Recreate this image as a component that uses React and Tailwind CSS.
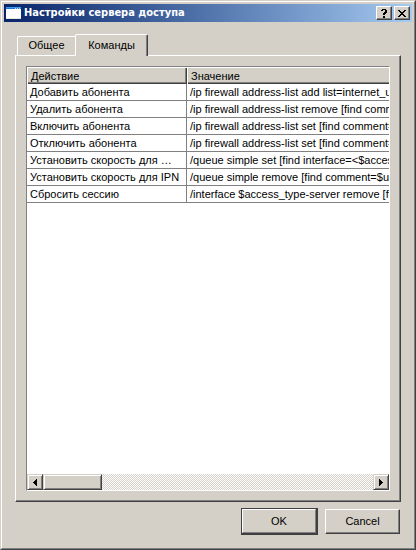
const rows = [
  ['Добавить абонента', '/ip firewall address-list add list=internet_users'],
  ['Удалить абонента', '/ip firewall address-list remove [find comment=$user]'],
  ['Включить абонента', '/ip firewall address-list set [find comment=$user]'],
  ['Отключить абонента', '/ip firewall address-list set [find comment=$user]'],
  ['Установить скорость для …', '/queue simple set [find interface=<$access_type>]'],
  ['Установить скорость для IPN', '/queue simple remove [find comment=$user]'],
  ['Сбросить сессию', '/interface $access_type-server remove [find user=$user]'],
];

// Classic two-tone raised edge shared by all the push buttons.
const raised =
  'bg-[#d4d0c8] border border-t-white border-l-white border-r-[#404040] border-b-[#404040] shadow-[inset_-1px_-1px_0_#808080]';
const scrollRaised =
  'bg-[#d4d0c8] border border-t-[#d4d0c8] border-l-[#d4d0c8] border-r-[#404040] border-b-[#404040] shadow-[inset_1px_1px_0_#fff,inset_-1px_-1px_0_#808080]';

function TitleBar() {
  return (
    <header className="flex h-[18px] shrink-0 items-center bg-linear-to-r from-[#0a246a] to-[#a6caf0] px-0.5">
      <svg className="h-3 w-[15px] shrink-0" viewBox="0 0 15 12" shapeRendering="crispEdges" aria-hidden="true">
        <rect width="15" height="12" fill="#fff" />
        <rect width="15" height="2" fill="#1c78d8" />
        <rect width="15" height="1" fill="#3c9cf0" />
        <rect x="9" y="1" width="1" height="1" fill="#bfe0ff" />
        <rect x="11" y="1" width="1" height="1" fill="#bfe0ff" />
        <rect x="13" y="1" width="1" height="1" fill="#f0b090" />
        <rect y="11" width="15" height="1" fill="#e8e4d8" />
      </svg>
      <h1 className="ml-[3px] grow truncate font-['DejaVu_Sans_Condensed','DejaVu_Sans',sans-serif] text-[11px] leading-[18px] font-bold text-white">
        Настройки сервера доступа
      </h1>
      <div className="flex gap-0.5">
        <button aria-label="Help" className={`flex h-3.5 w-4 items-center justify-center ${raised}`}>
          <svg className="h-[9px] w-1.5" viewBox="0 0 6 9" shapeRendering="crispEdges" aria-hidden="true">
            <path d="M1 0h4v1h1v3h-1v1h-1v1h-2v-2h1v-1h1v-2h-2v1h-2v-1h1zM2 7h2v2h-2z" />
          </svg>
        </button>
        <button aria-label="Close" className={`flex h-3.5 w-4 items-center justify-center ${raised}`}>
          <svg className="h-[7px] w-2" viewBox="0 0 8 7" shapeRendering="crispEdges" aria-hidden="true">
            <path d="M0 0h2v1h1v1h2v-1h1v-1h2v1h-1v1h-1v1h-1v1h1v1h1v1h1v1h-2v-1h-1v-1h-2v1h-1v1h-2v-1h1v-1h1v-1h1v-1h-1v-1h-1v-1h-1z" />
          </svg>
        </button>
      </div>
    </header>
  );
}

function Tabs() {
  return (
    <div role="tablist" className="flex shrink-0 items-end pl-0.5">
      <button
        role="tab"
        aria-selected="false"
        className="h-[19px] w-[58px] rounded-tl-[2px] border-t border-l border-white pb-px text-center leading-[17px]"
      >
        Общее
      </button>
      <button
        role="tab"
        aria-selected="true"
        className="relative z-10 -mb-px h-[22px] w-[73px] rounded-t-[2px] border border-b-0 border-t-white border-r-[#404040] border-l-white bg-[#d4d0c8] pb-0.5 text-center leading-[18px] shadow-[inset_-1px_0_0_#808080]"
      >
        Команды
      </button>
    </div>
  );
}

function ScrollBar() {
  return (
    <div className="flex h-4 shrink-0 bg-[repeating-conic-gradient(#fff_0_25%,#d4d0c8_0_50%)] bg-size-[2px_2px]">
      <button aria-label="Scroll left" className={`flex w-4 items-center justify-center ${scrollRaised}`}>
        <svg className="h-[7px] w-1" viewBox="0 0 4 7" shapeRendering="crispEdges" aria-hidden="true">
          <path d="M3 0h1v7h-1v-1h-1v-1h-1v-1h-1v-1h1v-1h1v-1h1z" />
        </svg>
      </button>
      <div className={`w-[59px] ${scrollRaised}`} />
      <button aria-label="Scroll right" className={`ml-auto flex w-4 items-center justify-center ${scrollRaised}`}>
        <svg className="h-[7px] w-1" viewBox="0 0 4 7" shapeRendering="crispEdges" aria-hidden="true">
          <path d="M0 0h1v1h1v1h1v1h1v1h-1v1h-1v1h-1v1h-1z" />
        </svg>
      </button>
    </div>
  );
}

function CommandTable() {
  const head =
    'h-[17px] border-t border-l border-white bg-[#d4d0c8] p-0 pl-[3px] text-left font-normal leading-[15px] shadow-[inset_-1px_-1px_0_#404040,inset_-2px_-2px_0_#808080]';
  return (
    <div className="flex min-h-0 grow flex-col border border-t-[#808080] border-r-white border-b-white border-l-[#808080] bg-white">
      <div className="grow overflow-hidden">
        <table className="w-[200%] table-fixed border-separate border-spacing-0 whitespace-nowrap">
          <colgroup>
            <col className="w-40" />
            <col />
          </colgroup>
          <thead>
            <tr>
              <th scope="col" className={head}>Действие</th>
              <th scope="col" className={head}>Значение</th>
            </tr>
          </thead>
          <tbody>
            {rows.map(([action, value]) => (
              <tr key={action}>
                <td className="h-[17px] border-r border-b border-[#808080] p-0 pl-[3px] leading-4">{action}</td>
                <td className="h-[17px] border-b border-[#808080] p-0 pl-[3px] leading-4">{value}</td>
              </tr>
            ))}
          </tbody>
        </table>
      </div>
      <ScrollBar />
    </div>
  );
}

export default function App() {
  return (
    <div className="flex h-screen flex-col border border-t-[#d4d0c8] border-r-[#404040] border-b-[#404040] border-l-[#d4d0c8] bg-[#d4d0c8] font-['Liberation_Sans',Arial,sans-serif] text-[11px] text-black">
      <div className="flex min-h-0 grow flex-col border border-t-white border-r-[#808080] border-b-[#808080] border-l-white p-0.5">
        <TitleBar />
        <main className="flex min-h-0 grow flex-col px-[11px] pt-3 pb-[11px]">
          <Tabs />
          <section
            role="tabpanel"
            className="flex min-h-0 grow flex-col border border-t-white border-r-[#404040] border-b-[#404040] border-l-white p-2.5 shadow-[inset_-1px_-1px_0_#808080]"
          >
            <CommandTable />
          </section>
          <footer className="mt-1.5 flex shrink-0 items-center justify-end gap-[7px] pr-px">
            <button className="border border-r-2 border-b-2 border-[#404040]">
              <span className="flex h-6 w-[74px] items-center justify-center border border-t-white border-r-[#808080] border-b-[#808080] border-l-white">
                OK
              </span>
            </button>
            <button className={`h-[25px] w-[75px] ${raised}`}>Cancel</button>
          </footer>
        </main>
      </div>
    </div>
  );
}
